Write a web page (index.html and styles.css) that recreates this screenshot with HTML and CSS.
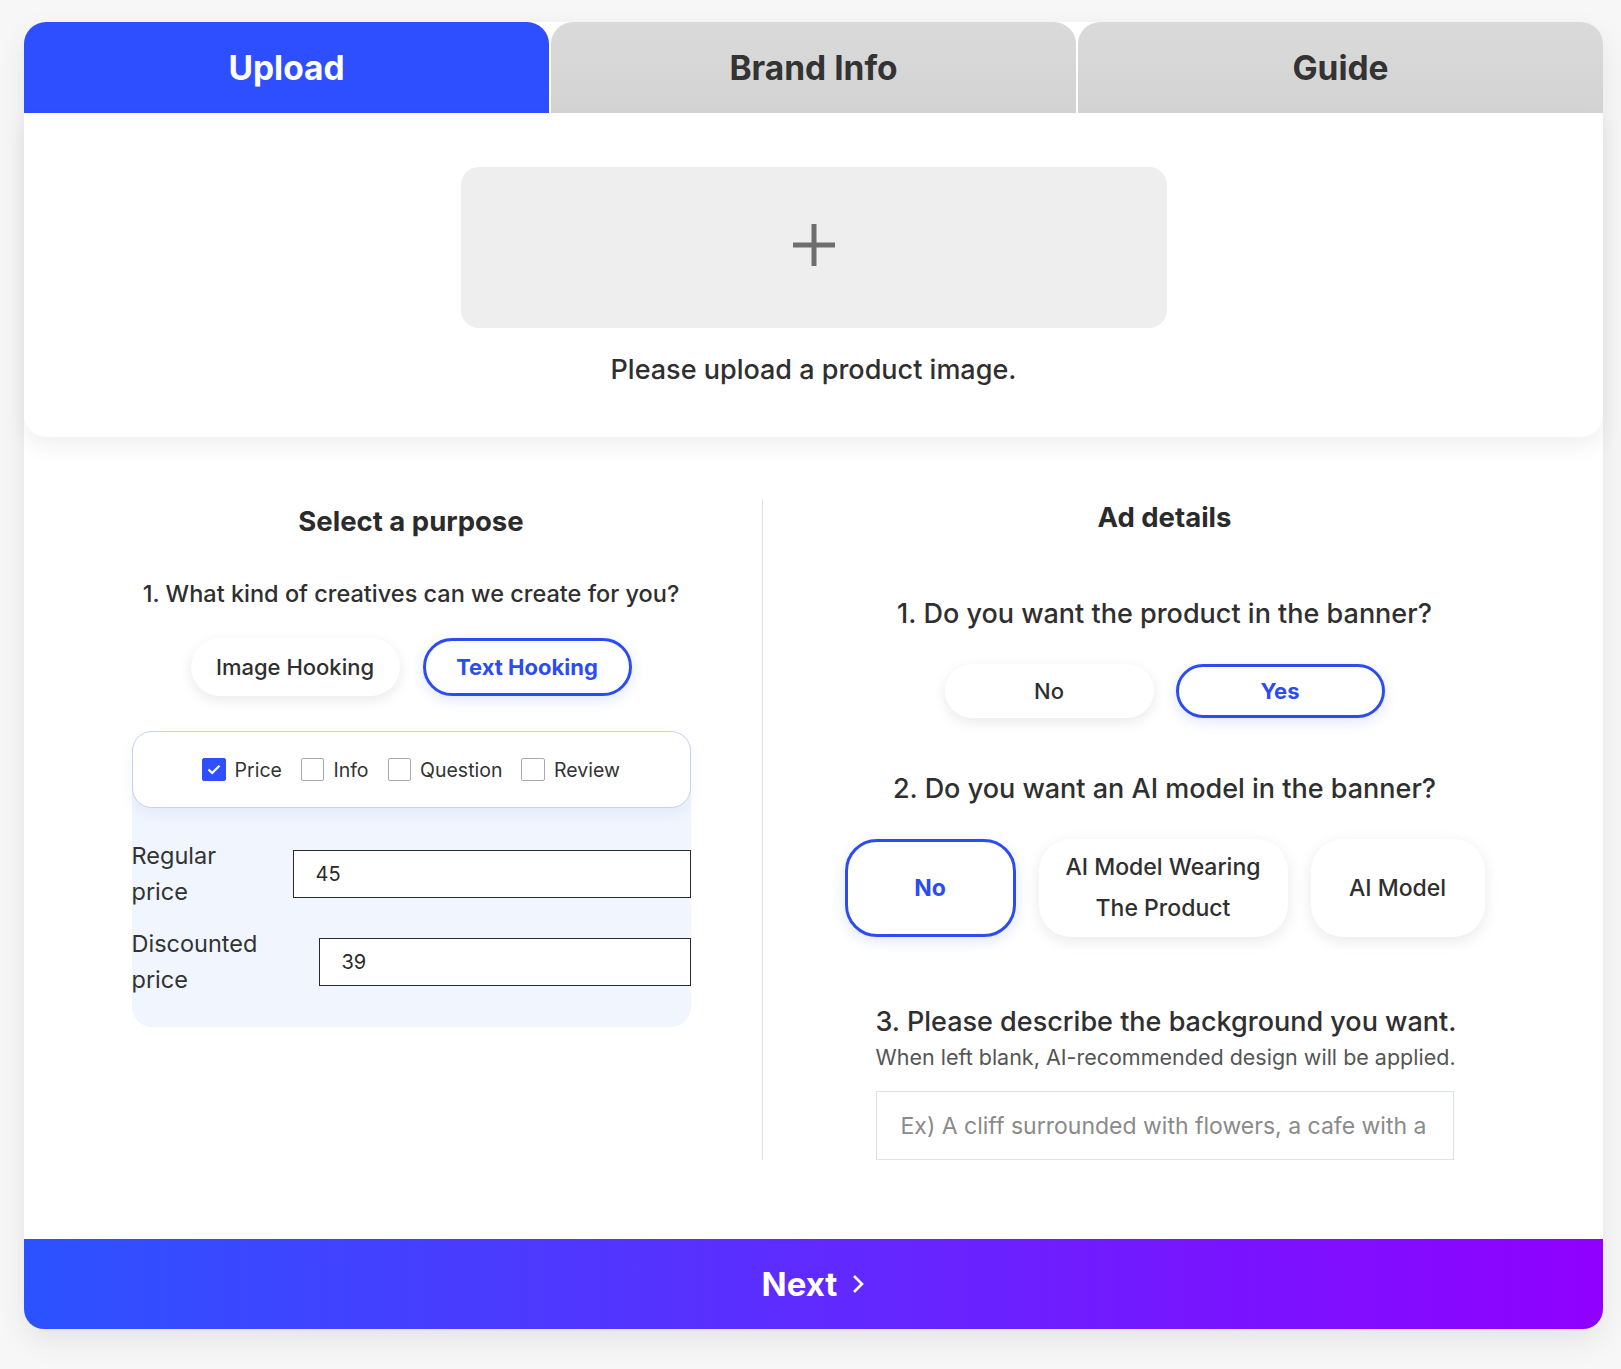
FILE: index.html
```html
<!DOCTYPE html>
<html lang="en">
<head>
<meta charset="utf-8">
<title>Create Ad</title>
<link rel="stylesheet" href="styles.css">
</head>
<body>
<div class="page">
  <div class="card">
    <div class="tabs">
      <div class="tab active">Upload</div>
      <div class="tab">Brand Info</div>
      <div class="tab">Guide</div>
    </div>

    <div class="upload-panel">
      <div class="dropzone">
        <svg class="plus" width="42" height="42" viewBox="0 0 42 42"><path d="M21 0V42M0 21H42" stroke="#6e6e6e" stroke-width="5"/></svg>
      </div>
      <p class="upload-hint">Please upload a product image.</p>
    </div>

    <div class="lower">
      <div class="col col-left">
        <h2 class="col-title">Select a purpose</h2>
        <p class="q-small">1. What kind of creatives can we create for you?</p>
        <div class="pill-row">
          <button class="pill pill-wide">Image Hooking</button>
          <button class="pill pill-wide selected">Text Hooking</button>
        </div>
        <div class="options">
          <div class="check-card">
            <label class="check"><span class="box checked"><svg width="14" height="11" viewBox="0 0 14 11"><path d="M1.5 5.5L5.2 9L12.5 1.8" stroke="#fff" stroke-width="2.2" fill="none"/></svg></span>Price</label>
            <label class="check"><span class="box"></span>Info</label>
            <label class="check"><span class="box"></span>Question</label>
            <label class="check"><span class="box"></span>Review</label>
          </div>
          <div class="price-row first">
            <span class="price-label label-regular">Regular price</span>
            <input class="price-input" type="text" value="45">
          </div>
          <div class="price-row">
            <span class="price-label label-discount">Discounted price</span>
            <input class="price-input" type="text" value="39">
          </div>
        </div>
      </div>

      <div class="col col-right">
        <h2 class="col-title title-ad">Ad details</h2>
        <p class="q-large q1">1. Do you want the product in the banner?</p>
        <div class="pill-row yesno">
          <button class="pill pill-yn">No</button>
          <button class="pill pill-yn selected">Yes</button>
        </div>
        <p class="q-large q2">2. Do you want an AI model in the banner?</p>
        <div class="model-row">
          <button class="tile tile-no selected">No</button>
          <button class="tile tile-wear">AI Model Wearing<br>The Product</button>
          <button class="tile tile-model">AI Model</button>
        </div>
        <div class="bg-block">
          <p class="q-large q3">3. Please describe the background you want.</p>
          <p class="sub">When left blank, AI-recommended design will be applied.</p>
          <input class="bg-input" type="text" placeholder="Ex) A cliff surrounded with flowers, a cafe with a nice view">
        </div>
      </div>
    </div>

    <button class="next">Next <svg width="14" height="22" viewBox="0 0 14 22"><path d="M3 3L11 11L3 19" stroke="#fff" stroke-width="2.6" fill="none"/></svg></button>
  </div>
</div>
</body>
</html>
```

FILE: styles.css
```css
* { box-sizing: border-box; }
html, body { margin: 0; padding: 0; }
body {
  background: #f7f7f7;
  font-family: Inter, "Noto Sans", "Liberation Sans", sans-serif;
  color: #2f2f2f;
}
p, h2 { margin: 0; }
button, input { font-family: inherit; }

.page { padding: 22px 0 40px 24px; }

.card {
  width: 1579px;
  background: #fff;
  border-radius: 22px;
  box-shadow: 0 12px 30px rgba(0,0,0,0.08);
}

.tabs { display: flex; gap: 2px; height: 91px; }
.tab {
  flex: 1;
  display: flex;
  align-items: center;
  justify-content: center;
  border-radius: 22px 22px 0 0;
  background: linear-gradient(#dadada, #d3d3d3);
  font-size: 33.5px;
  font-weight: 700;
  color: #333;
}
.tab.active { background: #2e4fff; color: #fff; }

.upload-panel {
  height: 324px;
  padding-top: 54px;
  display: flex;
  flex-direction: column;
  align-items: center;
  border-radius: 0 0 22px 22px;
  box-shadow: 0 10px 22px rgba(0,0,0,0.06);
  position: relative;
  background: #fff;
}
.dropzone {
  width: 706px;
  height: 161px;
  border-radius: 18px;
  background: #eeeeee;
  display: flex;
  align-items: center;
  justify-content: center;
}
.plus { margin-bottom: 6px; }
.upload-hint {
  margin-top: 27px;
  font-size: 27px;
  line-height: 30px;
  font-weight: 500;
  color: #2f2f2f;
}

.lower {
  display: grid;
  grid-template-columns: 702px 1fr;
  padding: 62px 37px 79px 36px;
}
.col { display: flex; flex-direction: column; align-items: center; }
.col-right { border-left: 1px solid #e2e2e2; }

.col-title {
  font-size: 27.5px;
  line-height: 30px;
  font-weight: 700;
  color: #2b2b2b;
  padding-top: 7px;
}
.title-ad { padding-top: 3px; }

.q-small {
  margin-top: 44px;
  font-size: 23.5px;
  line-height: 28px;
  font-weight: 500;
}
.q-large {
  font-size: 27px;
  line-height: 32px;
  font-weight: 500;
}
.q1 { margin-top: 66px; }
.q2 { margin-top: 55px; }

.pill-row { display: flex; gap: 23px; margin-top: 30px; }
.yesno { margin-top: 34px; gap: 22px; }

.pill {
  border: 3px solid transparent;
  border-radius: 40px;
  background: #fff;
  box-shadow: 0 4px 14px rgba(0,0,0,0.09);
  font-size: 22px;
  font-weight: 500;
  color: #2f2f2f;
  cursor: pointer;
}
.pill.selected, .tile.selected {
  border-color: #2d4cf0;
  color: #2d4cf0;
  font-weight: 700;
  box-shadow: 0 4px 14px rgba(45,76,240,0.14);
}
.pill-wide { width: 209px; height: 58px; }
.pill-yn { width: 209px; height: 54px; }

.options {
  margin-top: 35px;
  width: 559px;
  background: #f0f5fe;
  border-radius: 20px;
  padding-bottom: 29px;
}
.check-card {
  height: 77px;
  background: #fff;
  border: 1px solid #c5d3ee;
  border-radius: 20px;
  box-shadow: 0 6px 14px rgba(90,120,190,0.08);
  display: flex;
  align-items: center;
  justify-content: center;
  gap: 19px;
}
.check {
  display: flex;
  align-items: center;
  gap: 9px;
  font-size: 19.5px;
  color: #333;
}
.box {
  width: 23.5px;
  height: 23.5px;
  border: 1.5px solid #aaa;
  border-radius: 2px;
  background: #fff;
  display: flex;
  align-items: center;
  justify-content: center;
}
.box.checked { background: #2e4fff; border-color: #2e4fff; }

.price-row {
  display: flex;
  align-items: center;
  margin-top: 16px;
}
.price-row.first { margin-top: 30px; }
.price-label {
  font-size: 23.5px;
  line-height: 36px;
  color: #333;
  flex: none;
}
.label-regular { width: 161px; padding-right: 60px; }
.label-discount { width: 187px; padding-right: 50px; }
.price-input {
  flex: 1;
  min-width: 0;
  height: 48px;
  border: 1.5px solid #2a2a2a;
  border-radius: 0;
  padding: 0 22px;
  font-size: 20px;
  color: #2a2a2a;
  background: #fff;
  outline: none;
}

.model-row { display: flex; gap: 23px; margin-top: 34px; }
.tile {
  height: 98px;
  border: 3px solid transparent;
  border-radius: 32px;
  background: #fff;
  box-shadow: 0 4px 16px rgba(0,0,0,0.09);
  font-size: 23px;
  line-height: 41px;
  font-weight: 500;
  color: #2f2f2f;
}
.tile-no { width: 171px; }
.tile-wear { width: 249px; }
.tile-model { width: 174px; }

.bg-block { width: 578px; margin-top: 69px; }
.q3 { font-size: 27px; white-space: nowrap; }
.sub {
  margin-top: 6px;
  font-size: 21.5px;
  line-height: 26px;
  color: #555;
  white-space: nowrap;
}
.bg-input {
  margin-top: 21px;
  width: 100%;
  height: 69px;
  border: 1px solid #dde2e8;
  border-radius: 0;
  padding: 0 24px;
  font-size: 23px;
  outline: none;
}
.bg-input::placeholder { color: #8a8a8a; }

.next {
  display: flex;
  align-items: center;
  justify-content: center;
  gap: 14px;
  width: 100%;
  height: 90px;
  border: 0;
  border-radius: 0 0 20px 20px;
  background: linear-gradient(90deg, #2b52ff 0%, #5533ff 40%, #9000ff 100%);
  color: #fff;
  font-size: 33px;
  font-weight: 700;
  cursor: pointer;
}
```
